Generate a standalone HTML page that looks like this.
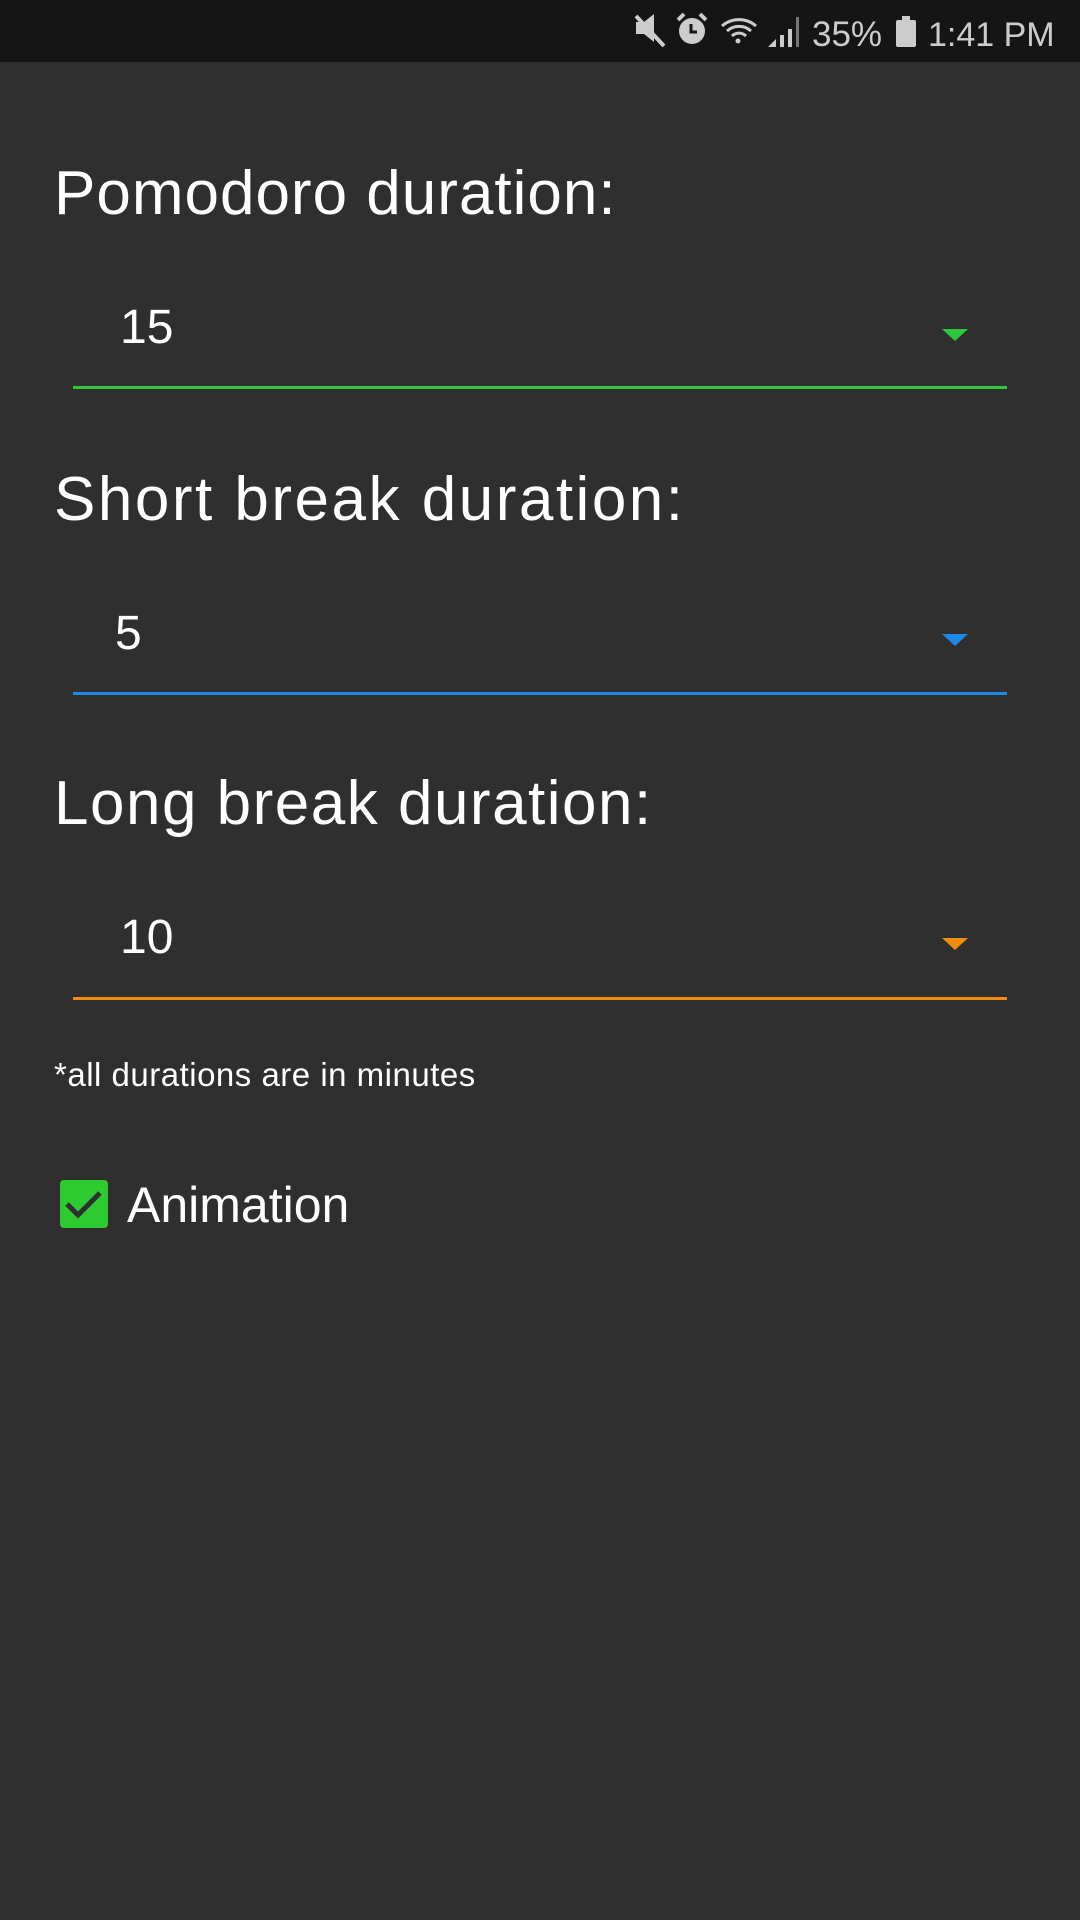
<!DOCTYPE html>
<html><head><meta charset="utf-8"><style>
*{margin:0;padding:0;box-sizing:border-box}
body{width:1080px;height:1920px;background:#2f2f2f;font-family:"Liberation Sans",sans-serif;color:#fff;position:relative;overflow:hidden}
.sb{position:absolute;left:0;top:0;width:1080px;height:62px;background:#151515}
.a{position:absolute;white-space:nowrap}
.lbl{font-size:62px;left:54px;letter-spacing:1px}
.val{font-size:48px}
.line{position:absolute;left:73px;width:934px;height:3px}
.arr{position:absolute;left:942px;width:0;height:0;border-left:13px solid transparent;border-right:13px solid transparent;border-top:12px solid}
</style></head><body>
<div class="sb">
<svg width="480" height="62" style="position:absolute;left:600px;top:0" viewBox="0 0 480 62">
<g fill="#ccc">
<path d="M36 22h8l10-8v28l-10-8h-8z"/>
<path d="M36 16l28 30" stroke="#ccc" stroke-width="4"/>
<circle cx="92" cy="31" r="13"/>
<path d="M78 20l6-6M106 20l-6-6" stroke="#ccc" stroke-width="4"/>
<path d="M91 24v8h6" stroke="#151515" stroke-width="3" fill="none"/>
<path d="M122 26a26 26 0 0 1 34 0M127 31a18 18 0 0 1 24 0M132 36a10 10 0 0 1 14 0" stroke="#ccc" stroke-width="3" fill="none"/>
<circle cx="138" cy="41" r="2.5"/>
<path d="M168 47l8-8v8zM180 47v-12h4v12zM188 47v-18h4v18z"/>
<rect x="196" y="17" width="3" height="30" fill="#777"/>
<rect x="296" y="20" width="20" height="27" rx="2"/><rect x="302" y="16" width="8" height="4"/>
</g>
<text x="212" y="46" font-family="Liberation Sans" font-size="35" fill="#ccc">35%</text>
<text x="328" y="46" font-family="Liberation Sans" font-size="34" fill="#ccc">1:41 PM</text>
</svg>
</div>
<div class="a lbl" style="top:158px">Pomodoro duration:</div>
<div class="a val" style="left:120px;top:300px">15</div>
<div class="arr" style="top:329px;border-top-color:#2ec93a"></div>
<div class="line" style="top:386px;background:#2ec93a"></div>

<div class="a lbl" style="top:464px;letter-spacing:2.5px">Short break duration:</div>
<div class="a val" style="left:115px;top:606px">5</div>
<div class="arr" style="top:634px;border-top-color:#1e88e5"></div>
<div class="line" style="top:692px;background:#1e88e5"></div>

<div class="a lbl" style="top:768px;letter-spacing:1.5px">Long break duration:</div>
<div class="a val" style="left:120px;top:910px">10</div>
<div class="arr" style="top:938px;border-top-color:#f08c10"></div>
<div class="line" style="top:997px;background:#f08c10"></div>

<div class="a" style="left:54px;top:1056px;font-size:33px;letter-spacing:0.5px">*all durations are in minutes</div>
<div style="position:absolute;left:60px;top:1180px;width:48px;height:48px;background:#2ecc30;border-radius:4px">
<svg width="48" height="48" viewBox="0 0 48 48"><path d="M7 24l11 11 22-22" stroke="#2f2f2f" stroke-width="5" fill="none"/></svg></div>
<div class="a" style="left:127px;top:1176px;font-size:50px">Animation</div>
</body></html>
